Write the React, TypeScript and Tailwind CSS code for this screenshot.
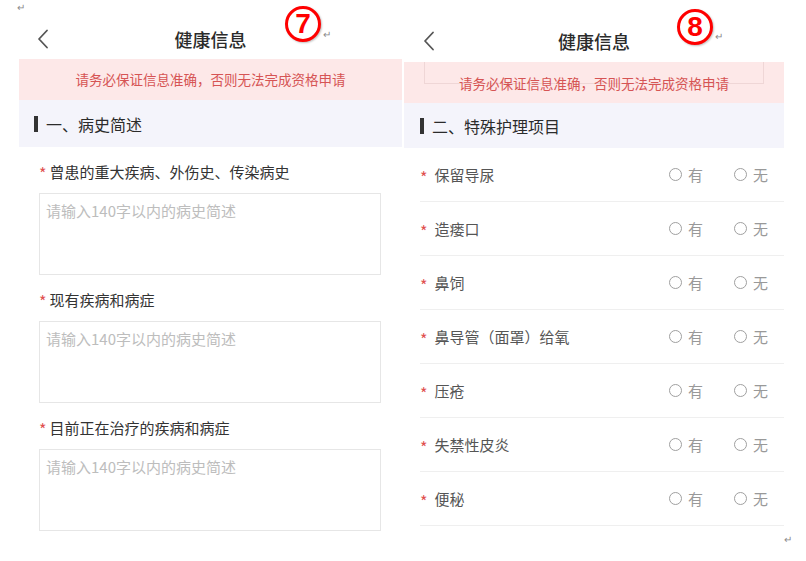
import React from 'react';

const CJK = { fontFamily: '"Noto Sans CJK SC", "Noto Sans", sans-serif' };

const Chevron = () => (
  <svg width="12" height="20" viewBox="0 0 12 20" fill="none">
    <polyline points="10,1.5 2,10 10,18.5" stroke="#555" strokeWidth="1.8" strokeLinecap="round" strokeLinejoin="round" />
  </svg>
);

// Word-style paragraph mark
const Ret = ({ className = '' }: { className?: string }) => (
  <span className={`absolute text-[10px] leading-[12px] text-[#8a8a8a] ${className}`}>↵</span>
);

const Badge = ({ n, className = '' }: { n: string; className?: string }) => (
  <div
    className={`absolute w-[36px] h-[36px] rounded-full border-[3px] border-[#ff0000] bg-white flex items-center justify-center shadow-[1px_1px_2px_rgba(0,0,0,0.25)] ${className}`}
  >
    <span className="text-[28px] leading-none font-black text-[#ff0000]" style={{ fontFamily: '"Liberation Sans", Arial, sans-serif' }}>
      {n}
    </span>
  </div>
);

const NavBar = ({ h, pl, pt }: { h: string; pl: string; pt: string }) => (
  <div className={`grid grid-cols-[1fr_auto_1fr] items-center ${h} ${pt}`}>
    <div className={pl}>
      <Chevron />
    </div>
    <h1 className="text-[18px] font-medium text-[#2b2b2b] leading-none">健康信息</h1>
    <div />
  </div>
);

const Star = () => <span className="text-[#e05050] text-[16px] leading-none translate-y-[2px]">*</span>;

const historyFields = ['曾患的重大疾病、外伤史、传染病史', '现有疾病和病症', '目前正在治疗的疾病和病症'];

const careItems = ['保留导尿', '造瘘口', '鼻饲', '鼻导管（面罩）给氧', '压疮', '失禁性皮炎', '便秘'];

const Radio = ({ label }: { label: string }) => (
  <div className="flex items-center gap-[6px]">
    <span className="w-[13px] h-[13px] rounded-full border-[1.5px] border-[#a0a0a0]" />
    <span className="text-[15px] text-[#999] leading-none">{label}</span>
  </div>
);

export default function App() {
  return (
    <div className="relative w-[806px] h-[561px] bg-white overflow-hidden" style={CJK}>
      <div className="flex pl-[19px] gap-[2px]">
        {/* Screen 7 */}
        <div className="w-[383px] flex flex-col">
          <NavBar h="h-[59px]" pt="pt-[18px]" pl="pl-[18px]" />
          <div className="h-[41px] bg-[#fde8e8] flex items-center justify-center">
            <span className="text-[13.5px] text-[#d65454]">请务必保证信息准确，否则无法完成资格申请</span>
          </div>
          <div className="h-[47px] bg-[#f4f4fb] flex items-center pl-[15px] gap-[8px]">
            <span className="w-[4px] h-[16px] bg-[#333]" />
            <span className="text-[16px] text-[#2b2b2b]">一、病史简述</span>
          </div>
          <div className="flex flex-col pl-[20px] pr-[21px]">
            {historyFields.map((f) => (
              <div key={f} className="flex flex-col">
                <div className="mt-[14px] h-[20px] flex items-center gap-[3px]">
                  <Star />
                  <span className="text-[15px] text-[#333] leading-none">{f}</span>
                </div>
                <div className="mt-[12px] h-[82px] border border-[#e6e6e6] px-[6px] pt-[4px]">
                  <span className="text-[15px] text-[#bdbdbd] leading-none">请输入140字以内的病史简述</span>
                </div>
              </div>
            ))}
          </div>
        </div>

        {/* Screen 8 */}
        <div className="w-[380px] flex flex-col">
          <NavBar h="h-[62px]" pt="pt-[20px]" pl="pl-[19px]" />
          <div className="h-[41px] bg-[#fde8e8] flex flex-col items-center">
            <div className="h-[22px] w-[340px] border-x border-b border-[#efd6d6] -mb-[22px]" />
            <div className="flex-1 flex items-center justify-center pt-[1px]">
              <span className="text-[13.5px] text-[#d65454]">请务必保证信息准确，否则无法完成资格申请</span>
            </div>
          </div>
          <div className="h-[45px] bg-[#f4f4fb] flex items-center pl-[16px] gap-[8px]">
            <span className="w-[4px] h-[16px] bg-[#333]" />
            <span className="text-[16px] text-[#2b2b2b]">二、特殊护理项目</span>
          </div>
          <div className="flex flex-col pl-[16px]">
            {careItems.map((c) => (
              <div key={c} className="h-[54px] border-b border-[#efefef] flex items-center pr-[16px]">
                <div className="flex-1 flex items-center gap-[7px]">
                  <Star />
                  <span className="text-[15px] text-[#555] leading-none">{c}</span>
                </div>
                <div className="flex items-center gap-[31px]">
                  <Radio label="有" />
                  <Radio label="无" />
                </div>
              </div>
            ))}
          </div>
        </div>
      </div>

      <Badge n="7" className="left-[285px] top-[6px]" />
      <Badge n="8" className="left-[677px] top-[9px]" />
      <Ret className="left-[17px] top-[1px]" />
      <Ret className="left-[323px] top-[28px]" />
      <Ret className="left-[715px] top-[30px]" />
      <Ret className="left-[784px] top-[533px]" />
    </div>
  );
}
